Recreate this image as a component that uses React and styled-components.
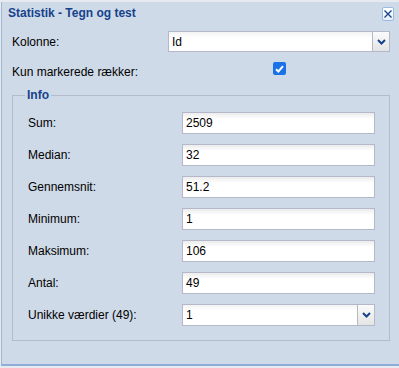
import React from 'react';
import styled, { createGlobalStyle } from 'styled-components';

const Global = createGlobalStyle`
  html, body { margin: 0; padding: 0; background: #e7ebf0; }
  body { font-family: "Liberation Sans", Arial, sans-serif; font-size: 12px; color: #000; }
  * { box-sizing: border-box; }
`;

const Window = styled.div`
  width: 398px;
  height: 364px;
  margin: 2px 0 0 1px;
  background: #cfdae8;
  border-left: 1px solid #9fb6d4;
  border-bottom: 2px solid #8eadd8;
  display: flex;
  flex-direction: column;
`;

const TitleBar = styled.div`
  height: 22px;
  display: flex;
  align-items: center;
  justify-content: space-between;
  padding: 0 5px 0 6px;
`;

const Title = styled.div`
  font-weight: bold;
  color: #15428b;
  font-size: 12px;
`;

const CloseButton = styled.button`
  width: 12px;
  height: 14px;
  padding: 0;
  margin-top: 1px;
  border: 1px solid #99bbe8;
  border-radius: 2px;
  background: linear-gradient(#ffffff, #e8eef7);
  display: flex;
  align-items: center;
  justify-content: center;
`;

const FormRow = styled.div`
  display: grid;
  grid-template-columns: 156px 1fr;
  align-items: ${p => (p.$top ? 'start' : 'center')};
  padding: 0 9px 0 10px;
  height: ${p => p.$h}px;
  margin-top: ${p => p.$mt}px;
`;

const Label = styled.label`
  font-size: 12px;
  color: #000;
  white-space: nowrap;
  align-self: center;
`;

const ComboBox = styled.div`
  height: ${p => p.$h}px;
  display: flex;
  border: 1px solid #b5b8c8;
  background: linear-gradient(#f3f3f3, #ffffff 6px);
`;

const ComboValue = styled.div`
  flex: 1;
  display: flex;
  align-items: center;
  padding-left: 3px;
  font-size: 12px;
`;

const Trigger = styled.div`
  width: 17px;
  border-left: 1px solid #b5b8c8;
  background: linear-gradient(#fbfbfb, #e4e4e4);
  display: flex;
  align-items: center;
  justify-content: center;
`;

const CheckBox = styled.div`
  justify-self: center;
  margin-top: 1px;
  margin-left: 1px;
  width: 13px;
  height: 13px;
  border-radius: 2px;
  background: #1b72e8;
  display: flex;
  align-items: center;
  justify-content: center;
`;

const Fieldset = styled.fieldset`
  margin: 5px 9px 0 10px;
  padding: 0;
  border: 1px solid #b3bccb;
  min-width: 0;
`;

const Legend = styled.legend`
  margin-left: 12px;
  padding: 0 2px;
  font-weight: bold;
  color: #15428b;
  font-size: 12px;
  line-height: 14px;
`;

const FieldGrid = styled.div`
  display: grid;
  grid-template-columns: 154px 1fr;
  row-gap: 10px;
  padding: 10px 14px 14px 15px;
  align-items: center;
`;

const TextField = styled.input`
  height: 22px;
  width: 100%;
  border: 1px solid #b5b8c8;
  background: linear-gradient(#ececec, #ffffff 6px);
  padding: 0 3px;
  font-family: inherit;
  font-size: 12px;
  color: #000;
  outline: none;
  margin: 0;
`;

const Chevron = () => (
  <svg width="9" height="6" viewBox="0 0 9 6">
    <path d="M1 1 L4.5 4.5 L8 1" fill="none" stroke="#15428b" strokeWidth="2" />
  </svg>
);

const Combo = ({ value, h }) => (
  <ComboBox $h={h}>
    <ComboValue>{value}</ComboValue>
    <Trigger><Chevron /></Trigger>
  </ComboBox>
);

const rows = [
  ['Sum:', '2509'],
  ['Median:', '32'],
  ['Gennemsnit:', '51.2'],
  ['Minimum:', '1'],
  ['Maksimum:', '106'],
  ['Antal:', '49'],
];

export default function App() {
  return (
    <>
      <Global />
      <Window>
        <TitleBar>
          <Title>Statistik - Tegn og test</Title>
          <CloseButton aria-label="Luk">
            <svg width="8" height="8" viewBox="0 0 8 8">
              <path d="M0.5 0.5 L7.5 7.5 M7.5 0.5 L0.5 7.5" stroke="#15428b" strokeWidth="1.3" />
            </svg>
          </CloseButton>
        </TitleBar>
        <FormRow $h={21} $mt={7}>
          <Label>Kolonne:</Label>
          <Combo value="Id" h={21} />
        </FormRow>
        <FormRow $h={22} $mt={9} $top>
          <Label>Kun markerede rækker:</Label>
          <CheckBox>
            <svg width="9" height="8" viewBox="0 0 9 8">
              <path d="M1 4.2 L3.4 6.5 L8 1.2" fill="none" stroke="#fff" strokeWidth="2" />
            </svg>
          </CheckBox>
        </FormRow>
        <Fieldset>
          <Legend>Info</Legend>
          <FieldGrid>
            {rows.map(([l, v]) => (
              <React.Fragment key={l}>
                <Label>{l}</Label>
                <TextField readOnly value={v} />
              </React.Fragment>
            ))}
            <Label>Unikke værdier (49):</Label>
            <Combo value="1" h={22} />
          </FieldGrid>
        </Fieldset>
      </Window>
    </>
  );
}
